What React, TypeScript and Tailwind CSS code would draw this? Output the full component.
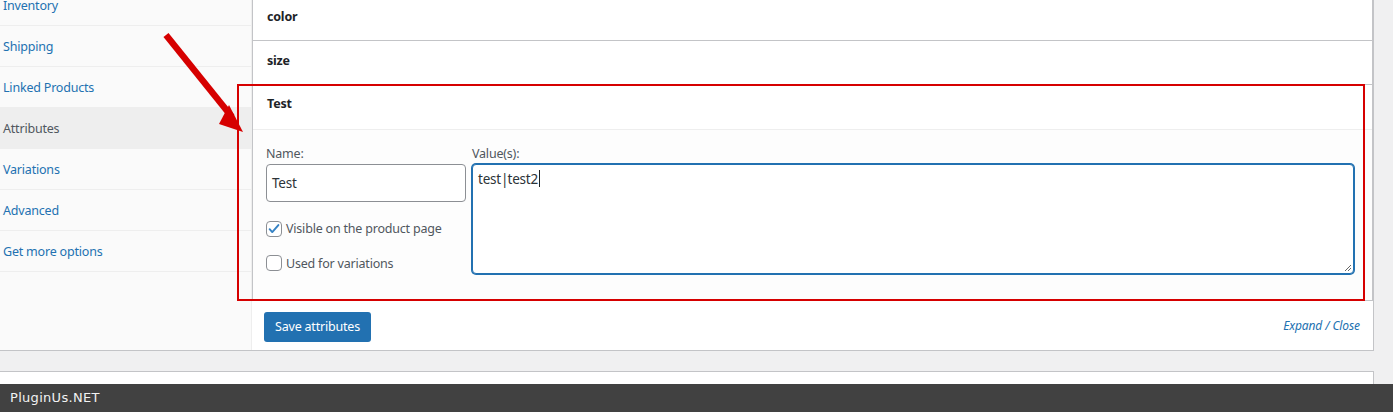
import React from 'react';

const tabs = [
  { label: 'Inventory' },
  { label: 'Shipping' },
  { label: 'Linked Products' },
  { label: 'Attributes', active: true },
  { label: 'Variations' },
  { label: 'Advanced' },
  { label: 'Get more options' },
];

const Checkbox: React.FC<{ checked?: boolean }> = ({ checked }) => (
  <span className="w-[16px] h-[16px] rounded-[4px] border border-[#8c8f94] bg-white flex items-center justify-center shrink-0">
    {checked && (
      <svg viewBox="0 0 16 16" className="w-[14px] h-[14px]">
        <path d="M3 8.2l3 3.3L13 3.5" fill="none" stroke="#3582c4" strokeWidth={2.2} strokeLinecap="round" strokeLinejoin="round" />
      </svg>
    )}
  </span>
);

const App: React.FC = () => {
  return (
    <div className="relative w-[1393px] h-[412px] overflow-hidden bg-[#f0f0f1] font-['Noto_Sans',sans-serif] text-[12.5px] tracking-[-0.2px] leading-[1.4] text-[#3c434a]">
      {/* product data panel */}
      <div className="-mt-[15px] w-[1374px] h-[366px] flex bg-white border-r border-b border-[#c3c4c7]">
        <ul className="w-[252px] shrink-0 bg-[#fafafa] border-r border-[#eee]">
          {tabs.map((t) => (
            <li
              key={t.label}
              className={`h-[41px] border-b border-[#eee] pl-[3px] pt-[2px] flex items-center ${t.active ? 'bg-[#eee] text-[#50575e]' : 'text-[#2271b1]'}`}
            >
              {t.label}
            </li>
          ))}
        </ul>

        <div className="flex-1 flex flex-col pt-[11px]">
          <div className="h-[45px] border border-[#c3c4c7] pl-[14px] pt-[11px] font-bold text-[#1d2327]">color</div>
          <div className="h-[44px] border-x border-b border-[#c3c4c7] pl-[14px] pt-[11px] font-bold text-[#1d2327]">size</div>
          <div className="border-x border-b border-[#c3c4c7]">
            <div className="h-[45px] border-b border-[#eee] pl-[14px] pt-[10px] font-bold text-[#1d2327] bg-white">Test</div>
            <div className="h-[170px] bg-[#fdfdfd] flex gap-[6px] pl-[13px] pr-[18px] pt-[15px]">
              <div className="w-[200px] flex flex-col">
                <label className="h-[19px] text-[#50575e]">Name:</label>
                <div className="h-[38px] rounded-[4px] border border-[#8c8f94] bg-white pl-[5px] flex items-center text-[13.5px] text-[#2c3338]">Test</div>
                <div className="mt-[18px] flex items-center gap-[4px] text-[#50575e]">
                  <Checkbox checked />
                  <span>Visible on the product page</span>
                </div>
                <div className="mt-[17px] flex items-center gap-[4px] text-[#50575e]">
                  <Checkbox />
                  <span>Used for variations</span>
                </div>
              </div>
              <div className="flex-1 flex flex-col">
                <label className="h-[19px] text-[#50575e]">Value(s):</label>
                <div className="relative h-[110px] rounded-[4px] border border-[#2271b1] shadow-[0_0_0_1px_#2271b1] bg-white px-[5px] pt-[5px] text-[13.5px] text-[#2c3338]">
                  test<span className="tracking-[-1px]">|</span>test2<span className="inline-block align-[-3px] ml-[1px] w-px h-[17px] bg-[#1d2327]" />
                  <svg viewBox="0 0 10 10" className="absolute right-[1px] bottom-[1px] w-[10px] h-[10px]">
                    <path d="M9 3L3 9M9 6L6 9" stroke="#666" strokeWidth={1} />
                  </svg>
                </div>
              </div>
            </div>
          </div>

          <div className="flex-1 flex items-start justify-between pl-[12px] pr-[13px] pt-[11px]">
            <button className="h-[30px] w-[107px] rounded-[3px] bg-[#2271b1] text-white text-[12.5px]">Save attributes</button>
            <span className="mt-[6px] italic text-[12px] tracking-[-0.1px] text-[#2271b1]">Expand / Close</span>
          </div>
        </div>
      </div>

      {/* next panel */}
      <div className="mt-[20px] w-[1374px] h-[20px] bg-white border-t border-r border-[#c3c4c7]" />

      {/* footer */}
      <div className="absolute left-0 right-0 bottom-0 h-[28px] bg-[#414141] pl-[10px] flex items-center font-['DejaVu_Sans',sans-serif] text-[13px] tracking-[0.3px] text-[#f2f2f2]">
        PluginUs.NET
      </div>

      {/* annotation: highlight box */}
      <div className="absolute left-[237px] top-[84px] w-[1128px] h-[217px] border-2 border-[#d60000]" />

      {/* annotation: arrow */}
      <svg className="absolute left-0 top-0 w-[300px] h-[150px]" viewBox="0 0 300 150">
        <line x1="166" y1="35" x2="232" y2="117" stroke="#d60000" strokeWidth={6.5} strokeLinecap="butt" />
        <polygon points="243,132 229,105 219,124" fill="#d60000" />
      </svg>
    </div>
  );
};

export default App;
